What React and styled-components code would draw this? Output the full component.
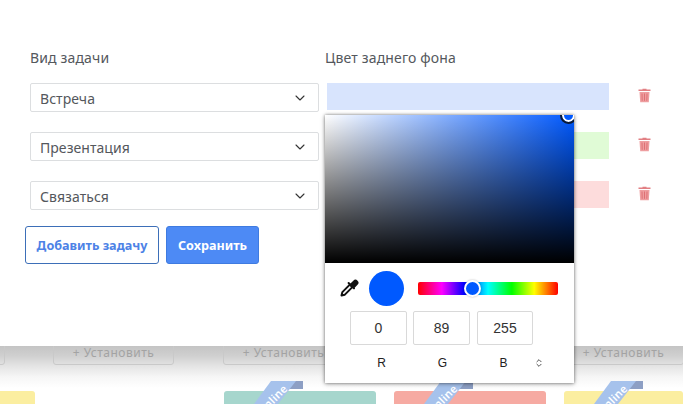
import React from "react";
import styled, { createGlobalStyle } from "styled-components";
import { ChevronDown, ChevronsUpDown } from "lucide-react";

const Global = createGlobalStyle`
  html, body { margin: 0; padding: 0; background: #fff; }
  body { width: 683px; height: 404px; overflow: hidden; font-family: "Noto Sans", sans-serif; }
  #root { height: 404px; }
`;

const Page = styled.div`
  position: relative;
  width: 683px;
  height: 404px;
  overflow: hidden;
  background: #fff;
  display: flex;
  flex-direction: column;
`;

const Modal = styled.div`
  height: 346px;
  flex: none;
  box-sizing: border-box;
  padding: 48px 0 0 30px;
  background: #fff;
  position: relative;
  z-index: 2;
`;

const Columns = styled.div`
  display: grid;
  grid-template-columns: 289px 282px 36px;
  column-gap: 8px;
  grid-auto-rows: 29px;
  row-gap: 20px;
  align-items: start;
`;

const HeadRow = styled.div`
  display: grid;
  grid-template-columns: 289px 282px;
  column-gap: 6px;
  height: 35px;
  font-size: 14px;
  line-height: 20px;
  letter-spacing: 0.15px;
  color: #54585d;
`;

const SelectBox = styled.div`
  box-sizing: border-box;
  height: 29px;
  border: 1px solid #dcdee0;
  border-radius: 2px;
  background: #fff;
  display: flex;
  align-items: center;
  justify-content: space-between;
  padding: 1px 10px 0 9px;
  font-size: 14px;
  letter-spacing: 0.05px;
  color: #54575c;
`;

const Swatch = styled.div`
  height: 27px;
  background: ${(p) => p.$color};
`;

const TrashCell = styled.div`
  height: 25px;
  display: flex;
  align-items: center;
  justify-content: center;
  padding-left: 19px;
`;

const Actions = styled.div`
  display: flex;
  gap: 7px;
  margin: 16px 0 0 -5px;
`;

const Button = styled.button`
  box-sizing: border-box;
  height: 38px;
  width: ${(p) => p.$w}px;
  padding: 0;
  border: 1px solid ${(p) => (p.$primary ? "#3f7be0" : "#3d6fb8")};
  border-radius: 3px;
  background: ${(p) => (p.$primary ? "#4d8af5" : "#fff")};
  color: ${(p) => (p.$primary ? "#fff" : "#4d82e6")};
  font-family: "Noto Sans", sans-serif;
  font-weight: 700;
  font-size: 12.6px;
`;

const Under = styled.div`
  flex: 1;
  position: relative;
  background: linear-gradient(#c4c4c4 0, #d0d0d0 10px, #e4e4e4 20px, #f6f6f6 31px, #fff 42px);
`;

const InstallRow = styled.div`
  display: flex;
  margin-top: -7px;
  padding-left: 53px;
  gap: 49px;
`;

const InstallButton = styled.div`
  box-sizing: border-box;
  flex: none;
  width: 121px;
  height: 26px;
  border: 1px solid #c9c9c9;
  border-radius: 3px;
  display: flex;
  align-items: center;
  justify-content: center;
  font-size: 12px;
  letter-spacing: 0.5px;
  color: #a3a3a3;
`;

const EdgeButton = styled(InstallButton)`
  position: absolute;
  left: -116px;
  top: -7px;
`;

const Cards = styled.div`
  position: absolute;
  left: 0;
  right: 0;
  bottom: 0;
  height: 13px;
  display: grid;
  grid-template-columns: 35px 152px 152px 119px;
  column-gap: 18px;
`;

const Card = styled.div`
  position: relative;
  height: 13px;
  margin-left: ${(p) => p.$offset || 0}px;
  width: ${(p) => p.$w}px;
  background: ${(p) => p.$color};
  border-radius: ${(p) => (p.$flush ? "0 3px 0 0" : "3px 3px 0 0")};
`;

const RibbonFold = styled.div`
  position: absolute;
  left: 65px;
  top: -10px;
  width: 14px;
  height: 8px;
  background: #8d9fc4;
`;

const RibbonBand = styled.div`
  position: absolute;
  left: 30px;
  top: -10px;
  width: 44px;
  height: 23px;
  background: #a6c2ec;
  clip-path: polygon(17px 0, 42px 0, 24px 23px, 0 23px);
`;

const RibbonText = styled.div`
  position: absolute;
  left: -4px;
  top: 11px;
  width: 46px;
  height: 14px;
  transform: rotate(-45deg);
  font-size: 11px;
  line-height: 14px;
  font-weight: 600;
  letter-spacing: 0.3px;
  text-align: center;
  color: #fff;
`;

const Popover = styled.div`
  position: absolute;
  left: 325px;
  top: 115px;
  width: 249px;
  height: 268px;
  background: #fff;
  z-index: 3;
  box-shadow: 0 0 3px rgba(0, 0, 0, 0.45), 0 1px 5px rgba(0, 0, 0, 0.25);
  font-family: "Liberation Sans", sans-serif;
`;

const Saturation = styled.div`
  position: relative;
  height: 148px;
  overflow: hidden;
  background: linear-gradient(transparent, #000), linear-gradient(90deg, #fff, #0059ff);
`;

const SatThumb = styled.div`
  position: absolute;
  right: -1px;
  top: -6px;
  width: 9px;
  height: 9px;
  border: 2px solid #fff;
  border-radius: 50%;
  outline: 2px solid #0b1a33;
  background: #0059ff;
`;

const HueRow = styled.div`
  display: flex;
  align-items: center;
  height: 34px;
  margin-top: 8px;
  padding-left: 14px;
`;

const Preview = styled.div`
  width: 35px;
  height: 35px;
  border-radius: 50%;
  background: #0059ff;
  margin-left: 10px;
  flex: none;
`;

const HueBar = styled.div`
  position: relative;
  width: 140px;
  height: 13px;
  margin-left: 14px;
  border-radius: 2px;
  background: linear-gradient(90deg, #f00, #f0f 17%, #00f 33%, #0ff 50%, #0f0 67%, #ff0 83%, #f00);
`;

const HueThumb = styled.div`
  position: absolute;
  left: 46px;
  top: -2px;
  box-sizing: border-box;
  width: 17px;
  height: 17px;
  border: 2px solid #fff;
  border-radius: 50%;
  background: #0059ff;
  box-shadow: 0 0 2px rgba(0, 0, 0, 0.3);
`;

const Inputs = styled.div`
  display: flex;
  gap: 6px;
  margin: 6px 0 0 25px;
`;

const ValueBox = styled.div`
  box-sizing: border-box;
  width: ${(p) => p.$w}px;
  height: 34px;
  margin-left: ${(p) => p.$ml || 0}px;
  border: 1px solid #d9d9d9;
  border-radius: 2px;
  display: flex;
  align-items: center;
  justify-content: center;
  font-size: 14px;
  color: #333;
`;

const Labels = styled.div`
  position: relative;
  display: grid;
  grid-template-columns: 61px 61px 61px 30px;
  margin: 9px 0 0 26px;
  height: 18px;
  align-items: center;
  justify-items: center;
  font-size: 12px;
  color: #222;
`;

const Toggle = styled.div`
  display: flex;
  justify-self: start;
  color: #333;
`;

const tasks = [
  { name: "Встреча", color: "#d8e4fd" },
  { name: "Презентация", color: "#e0fbd6" },
  { name: "Связаться", color: "#fddcdc" },
];

const Eyedropper = () => (
  <svg width="20" height="20" viewBox="0 0 24 24" fill="none" stroke="#111" strokeWidth="2.4" strokeLinejoin="round" strokeLinecap="round">
    <path d="M3 21l1-4 9-9 3 3-9 9z" fill="#fff" />
    <path d="M11.5 6l6.5 6.5" />
    <path d="M14 8l4-4a2.4 2.4 0 0 1 3.4 3.4l-4 4z" fill="#111" />
  </svg>
);

const TrashIcon = () => (
  <svg width="13" height="15" viewBox="0 0 13 15">
    <path d="M4.5 1.5V.7h4v.8h4v1.6H.5V1.500z" fill="#e27f83" />
    <path d="M1.500 4h10l-.7 10.300H2.200z" fill="#ee9ea0" />
    <path d="M4 5.500l.2 7.300M6.500 5.500v7.300M9 5.500l-.2 7.300" stroke="#df7074" strokeWidth="1" fill="none" />
  </svg>
);

const Ribbon = () => (
  <>
    <RibbonFold />
    <RibbonBand>
      <RibbonText>online</RibbonText>
    </RibbonBand>
  </>
);

export default function App() {
  return (
    <Page>
      <Global />
      <Modal>
        <HeadRow>
          <span>Вид задачи</span>
          <span>Цвет заднего фона</span>
        </HeadRow>
        <Columns>
          {tasks.map((t) => (
            <React.Fragment key={t.name}>
              <SelectBox>
                {t.name}
                <ChevronDown size={16} color="#333" strokeWidth={1.6} />
              </SelectBox>
              <Swatch $color={t.color} />
              <TrashCell>
                <TrashIcon />
              </TrashCell>
            </React.Fragment>
          ))}
        </Columns>
        <Actions>
          <Button $w={134}>Добавить задачу</Button>
          <Button $w={93} $primary>Сохранить</Button>
        </Actions>
      </Modal>
      <Under>
        <EdgeButton>+ Установить</EdgeButton>
        <InstallRow>
          <InstallButton>+ Установить</InstallButton>
          <InstallButton>+ Установить</InstallButton>
          <InstallButton>+ Установить</InstallButton>
          <InstallButton>+ Установить</InstallButton>
        </InstallRow>
        <Cards>
          <Card $w={35} $color="#fbeea0" $flush />
          <Card $w={152} $offset={171} $color="#a6d6cd">
            <Ribbon />
          </Card>
          <Card $w={152} $offset={171} $color="#f6aaa2">
            <Ribbon />
          </Card>
          <Card $w={119} $offset={171} $color="#fbeea0">
            <Ribbon />
          </Card>
        </Cards>
      </Under>
      <Popover>
        <Saturation>
          <SatThumb />
        </Saturation>
        <HueRow>
          <Eyedropper />
          <Preview />
          <HueBar>
            <HueThumb />
          </HueBar>
        </HueRow>
        <Inputs>
          <ValueBox $w={57}>0</ValueBox>
          <ValueBox $w={57}>89</ValueBox>
          <ValueBox $w={56} $ml={1}>255</ValueBox>
        </Inputs>
        <Labels>
          <span>R</span>
          <span>G</span>
          <span>B</span>
          <Toggle>
            <ChevronsUpDown size={10} strokeWidth={2} />
          </Toggle>
        </Labels>
      </Popover>
    </Page>
  );
}
